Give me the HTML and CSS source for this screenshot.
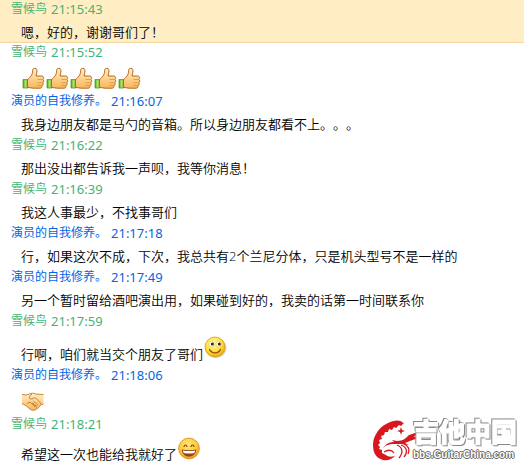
FILE: index.html
```html
<!DOCTYPE html>
<html lang="zh-CN">
<head>
  <meta charset="UTF-8">
  <meta name="viewport" content="width=device-width, initial-scale=1.0">
  <title>聊天记录</title>
  <link rel="stylesheet" href="styles.css">
</head>
<body>
  <!-- shared emoticons -->
  <svg class="defs" width="0" height="0" aria-hidden="true">
    <defs>
      <linearGradient id="skin" x1="0" y1="0" x2="0" y2="1">
        <stop offset="0" stop-color="#fff0c4"/>
        <stop offset="1" stop-color="#f9b65c"/>
      </linearGradient>
      <linearGradient id="cuff" x1="0" y1="0" x2="1" y2="0">
        <stop offset="0" stop-color="#4f9d16"/>
        <stop offset=".5" stop-color="#b4e36c"/>
        <stop offset="1" stop-color="#5fae20"/>
      </linearGradient>
      <radialGradient id="face" cx=".42" cy=".32" r=".7">
        <stop offset="0" stop-color="#fffaa0"/>
        <stop offset=".6" stop-color="#ffdf3a"/>
        <stop offset="1" stop-color="#eca50c"/>
      </radialGradient>
      <radialGradient id="grin" cx=".45" cy=".3" r=".7">
        <stop offset="0" stop-color="#ffe77a"/>
        <stop offset=".6" stop-color="#ffc93c"/>
        <stop offset="1" stop-color="#ee9420"/>
      </radialGradient>
      <symbol id="thumb" viewBox="0 0 24 24">
        <path d="M2 14.500h5v8.500H2z" fill="url(#cuff)" stroke="#5a9a20" stroke-width=".8"/>
        <path d="M6.500 14.500c2-1 3.800-3.500 4.800-6 .3-2 .1-4.300 1.400-5 1.800-.9 3.300.4 3.300 2.700 0 1.800-.7 3.200-.9 4.800h5.400c2.500 0 2.900 2.900 1.100 3.500 1.700.6 1.500 2.900 0 3.200 1 .8.700 2.500-.7 2.800.6 1.200-.2 2.700-1.800 2.700h-6.800c-2 0-3.800-.8-5.800-.8z" fill="url(#skin)" stroke="#b56a1c" stroke-width="1"/>
        <path d="M16.500 14.500h4.500M16.500 17.700h4.500M16.300 20.500h4" fill="none" stroke="#d58b3a" stroke-width=".7"/>
      </symbol>
    </defs>
  </svg>

  <main class="chat">
    <section class="message message-active">
      <h2 class="sender friend">雪候鸟 <time>21:15:43</time></h2>
      <p class="text">嗯，好的，谢谢哥们了！</p>
    </section>

    <section class="message">
      <h2 class="sender friend">雪候鸟 <time>21:15:52</time></h2>
      <p class="text emotes">
        <svg class="emote" role="img" aria-label="赞"><use href="#thumb"/></svg>
        <svg class="emote" role="img" aria-label="赞"><use href="#thumb"/></svg>
        <svg class="emote" role="img" aria-label="赞"><use href="#thumb"/></svg>
        <svg class="emote" role="img" aria-label="赞"><use href="#thumb"/></svg>
        <svg class="emote" role="img" aria-label="赞"><use href="#thumb"/></svg>
      </p>
    </section>

    <section class="message">
      <h2 class="sender self">演员的自我修养。 <time>21:16:07</time></h2>
      <p class="text">我身边朋友都是马勺的音箱。所以身边朋友都看不上。。。</p>
    </section>

    <section class="message">
      <h2 class="sender friend">雪候鸟 <time>21:16:22</time></h2>
      <p class="text">那出没出都告诉我一声呗，我等你消息！</p>
    </section>

    <section class="message">
      <h2 class="sender friend">雪候鸟 <time>21:16:39</time></h2>
      <p class="text">我这人事最少，不找事哥们</p>
    </section>

    <section class="message">
      <h2 class="sender self">演员的自我修养。 <time>21:17:18</time></h2>
      <p class="text">行，如果这次不成，下次，我总共有2个兰尼分体，只是机头型号不是一样的</p>
    </section>

    <section class="message">
      <h2 class="sender self">演员的自我修养。 <time>21:17:49</time></h2>
      <p class="text">另一个暂时留给酒吧演出用，如果碰到好的，我卖的话第一时间联系你</p>
    </section>

    <section class="message">
      <h2 class="sender friend">雪候鸟 <time>21:17:59</time></h2>
      <p class="text">行啊，咱们就当交个朋友了哥们
        <svg class="emote smile" viewBox="0 0 24 24" role="img" aria-label="微笑">
          <ellipse cx="13" cy="14" rx="10.500" ry="10" fill="#d8d2c0"/>
          <circle cx="12" cy="13" r="10" fill="url(#face)" stroke="#d99a16" stroke-width=".8"/>
          <ellipse cx="8.500" cy="10" rx="2.600" ry="2.900" fill="#fff" stroke="#c89a20" stroke-width=".4"/>
          <ellipse cx="15.500" cy="10" rx="2.600" ry="2.900" fill="#fff" stroke="#c89a20" stroke-width=".4"/>
          <circle cx="9.300" cy="10" r="1.500" fill="#402000"/>
          <circle cx="16.300" cy="10" r="1.500" fill="#402000"/>
          <path d="M6.500 15.500c2.500 4.600 8.500 4.600 11 0" fill="none" stroke="#8a3f08" stroke-width="1.200" stroke-linecap="round"/>
        </svg>
      </p>
    </section>

    <section class="message">
      <h2 class="sender self">演员的自我修养。 <time>21:18:06</time></h2>
      <p class="text emotes">
        <svg class="emote" viewBox="0 0 24 24" role="img" aria-label="握手">
          <path d="M1 6.500l4 .5 5-1.500c2-.6 3.500-.2 5 .6l7.500.4v9.500l-3 1c-1.500 2.500-4 5-7 5.300-2.500.2-5-2.300-7-4.300L1 15.500z" fill="url(#skin)"/>
          <path d="M1 6.500l4 .5 5-1.500c2-.6 3.500-.2 5 .6l7.500.4M22.500 16l-3 1c-1.500 2.500-4 5-7 5.300-2.500.2-5-2.300-7-4.300L1 15.500" fill="none" stroke="#c0782a" stroke-width=".9"/>
          <path d="M11 6c-2 1.500-3 3-2.500 4.500 1.500 1.200 3.500.2 5-1 2.500 1.500 5 4 6.500 6.500M6 15.500l3-1.500 1.500 1.500 1.800-.3.700 2 2 .3.300 2M12.500 13l4.500 4M10.500 15l3.800 4" fill="none" stroke="#b56a1c" stroke-width=".8"/>
        </svg>
      </p>
    </section>

    <section class="message">
      <h2 class="sender friend">雪候鸟 <time>21:18:21</time></h2>
      <p class="text">希望这一次也能给我就好了
        <svg class="emote laugh" viewBox="0 0 24 24" role="img" aria-label="大笑">
          <circle cx="12" cy="11.500" r="10.400" fill="url(#grin)" stroke="#d98a1c" stroke-width=".8"/>
          <path d="M7 9.500c.7-2 2.300-2 3 0M14 9.500c.7-2 2.300-2 3 0" fill="none" stroke="#7a3c08" stroke-width="1.100" stroke-linecap="round"/>
          <path d="M4.800 12.500c4.500 1 9.900 1 14.400 0-.3 4.300-3.200 7-7.200 7s-6.900-2.700-7.200-7z" fill="#8a4510"/>
          <path d="M5.800 13.500c4 .8 8.400.8 12.400 0-.2 1-.5 1.700-1 2.400-3.200.7-7.200.7-10.400 0-.5-.7-.8-1.400-1-2.400z" fill="#fff"/>
        </svg>
      </p>
    </section>
  </main>

  <aside class="watermark">
    <svg class="dragon" viewBox="0 0 50 48" aria-hidden="true">
      <g fill="#d7181f">
        <path d="M34 9C31 4 24 5 18 8 9 12 3 21 3 30c0 8 3 13 10 15 5 1 9-1 12-4-4 1-7 1-9-1l-4-2 0-3-3-1 1-2-2-2 2-2-1-3 3-1-1-3 3-1 1-3 3 0 1-3 3 1 2-3 2 1 3-3 2 1 3-3z"/>
        <path d="M13 33c3-4 6-6 11-6l-2-2 5 1c6 0 9-3 12-6l9-3-4 5 4 1-8 3-5 2 4 2-8-1-8 0c-4 0-7 1-10 4z"/>
        <path d="M31 12l1 3 3 1-3 1-1 3-1-3-3-1 3-1z"/>
      </g>
      <path d="M14 37c5-3 8-2 10 1M27 30c5 2 7 7 2 13M31 30c6 2 7 7 3 12M34 29c5 2 6 6 4 10" fill="none" stroke="#d7181f" stroke-width="1.300"/>
    </svg>
    <div class="brand">
      <strong class="brand-name">吉他中国</strong>
      <span class="brand-url">bbs.GuitarChina.com</span>
    </div>
  </aside>
</body>
</html>
```
FILE: styles.css
```css
* {
  box-sizing: border-box;
}

body {
  margin: 0;
  background: #fff;
  color: #000;
  font-family: "Noto Sans", "Noto Sans CJK SC", sans-serif;
  text-spacing-trim: space-all;
  overflow: hidden;
}

.defs {
  position: absolute;
}

.message {
  padding: 0 11px 2px;
}

.message-active {
  padding-bottom: 0;
  background: #ffedc4;
  border-bottom: 1px solid #f5d6a0;
}

.sender {
  display: flex;
  align-items: center;
  gap: 4px;
  margin: 0;
  font-size: 12px;
  font-weight: normal;
  line-height: 18px;
}

.sender time {
  font-size: 13px;
}

.friend {
  color: #42b475;
}

.self {
  color: #0068e0;
}

.text {
  display: flex;
  align-items: flex-end;
  margin: 0;
  padding: 4px 0 0 10px;
  font-family: "Open Sans", "Noto Sans CJK SC", sans-serif;
  font-size: 13px;
  font-weight: 350;
  line-height: 20px;
}

.emotes {
  padding-bottom: 1px;
}

.emote {
  flex: none;
  width: 24px;
  height: 24px;
}

.smile {
  margin-bottom: 6px;
}

.laugh {
  margin-bottom: 3px;
}

/* site mark over the log */
.watermark {
  position: absolute;
  right: 7px;
  bottom: 5px;
  display: flex;
  align-items: center;
}

.dragon {
  width: 50px;
  height: 48px;
  margin-right: -7px;
}

.brand {
  display: flex;
  flex-direction: column;
  color: #fff;
}

.brand-name {
  font-size: 26px;
  font-weight: 900;
  line-height: 32px;
  -webkit-text-stroke: 1px #fff;
  filter: drop-shadow(1px 1px #888) drop-shadow(-1px -1px #888);
}

.brand-url {
  font-family: "Liberation Sans", sans-serif;
  font-size: 10px;
  font-weight: bold;
  line-height: 14px;
  text-shadow: 1px 0 #666, -1px 0 #666, 0 1px #666, 0 -1px #666;
}
```
